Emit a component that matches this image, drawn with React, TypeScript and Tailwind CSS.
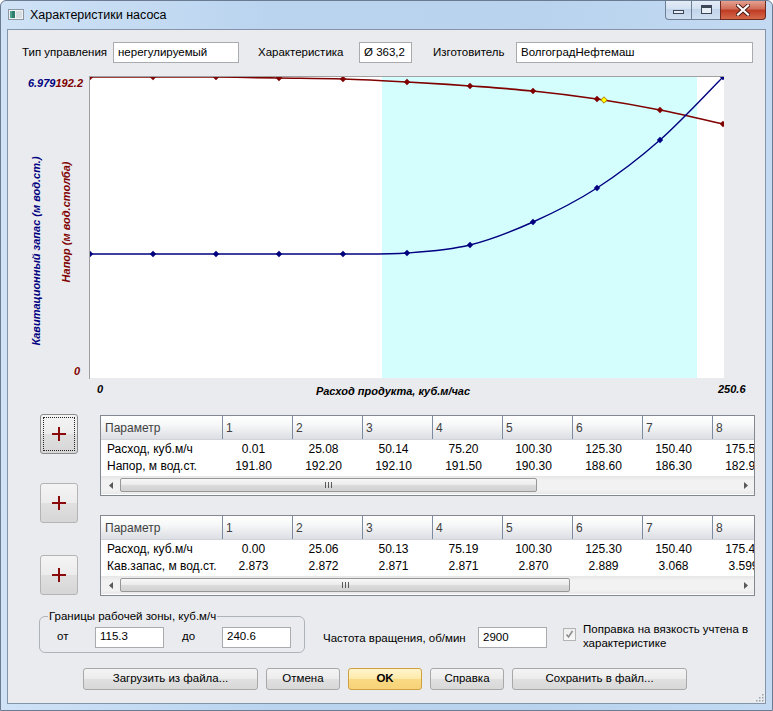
import React from "react";

const F = "font-['Liberation_Sans',Arial,sans-serif]";

type P = [number, number];

const redPts: P[] = [[82,7],[145,7],[208,7],[271,8],[335,9],[399,12],[462,16],[525,21],[589,29],[652,40],[715,54]];
const bluePts: P[] = [[82,184],[145,184],[208,184],[271,184],[335,184],[399,183],[462,175],[525,152],[589,118],[652,70],[715,7]];

function smooth(pts: P[]): string {
  let d = `M${pts[0][0]},${pts[0][1]}`;
  for (let i = 0; i < pts.length - 1; i++) {
    const p0 = pts[i - 1] || pts[i];
    const p1 = pts[i];
    const p2 = pts[i + 1];
    const p3 = pts[i + 2] || p2;
    const c1x = p1[0] + (p2[0] - p0[0]) / 6;
    const c1y = p1[1] + (p2[1] - p0[1]) / 6;
    const c2x = p2[0] - (p3[0] - p1[0]) / 6;
    const c2y = p2[1] - (p3[1] - p1[1]) / 6;
    d += ` C${c1x},${c1y} ${c2x},${c2y} ${p2[0]},${p2[1]}`;
  }
  return d;
}

function diamond(x: number, y: number, r: number) {
  return `${x},${y - r} ${x + r},${y} ${x},${y + r} ${x - r},${y}`;
}

function Chart() {
  const tf = { fontFamily: "'Liberation Sans', Arial, sans-serif", fontWeight: 700, fontStyle: "italic" as const, fontSize: 11 };
  return (
    <svg width="757" height="340" viewBox="0 0 757 340" className="block shrink-0">
      <defs>
        <clipPath id="plot">
          <rect x="82" y="7" width="634" height="301" />
        </clipPath>
      </defs>
      <rect x="81" y="6" width="635" height="302" fill="#ffffff" />
      <rect x="374" y="7" width="315" height="301" fill="#d4fefe" />
      <line x1="81.5" y1="6" x2="81.5" y2="309" stroke="#a0a0a0" />
      <line x1="81" y1="6.5" x2="716" y2="6.5" stroke="#a0a0a0" />
      <g clipPath="url(#plot)">
        <path d={smooth(redPts)} fill="none" stroke="#800000" strokeWidth="1.7" />
        <path d={smooth(bluePts)} fill="none" stroke="#000080" strokeWidth="1.4" />
        {redPts.map(([x, y], i) => (
          <polygon key={"r" + i} points={diamond(x, y, 3.2)} fill="#800000" />
        ))}
        {bluePts.map(([x, y], i) => (
          <polygon key={"b" + i} points={diamond(x, y, 3.2)} fill="#000080" />
        ))}
        <polygon points={diamond(596, 30, 3.2)} fill="#ffff00" stroke="#b07800" strokeWidth="1" />
      </g>
      <text x="75" y="17" textAnchor="end" style={tf}>
        <tspan fill="#000080">6.979</tspan>
        <tspan fill="#800000">192.2</tspan>
      </text>
      <text x="72" y="305" textAnchor="end" style={tf} fill="#800000">0</text>
      <text x="89" y="323" style={tf} fill="#000000">0</text>
      <text x="385" y="325" textAnchor="middle" style={tf} fill="#000000">Расход продукта, куб.м/час</text>
      <text x="710" y="323" style={tf} fill="#000000">250.6</text>
      <text transform="translate(32,181) rotate(-90)" textAnchor="middle" style={tf} fill="#000080">
        Кавитационный запас (м вод.ст.)
      </text>
      <text transform="translate(62,152) rotate(-90)" textAnchor="middle" style={tf} fill="#800000">
        Напор (м вод.столба)
      </text>
    </svg>
  );
}

function Tri({ dir }: { dir: "l" | "r" }) {
  return (
    <svg width="4" height="7" viewBox="0 0 4 7">
      <path d={dir === "l" ? "M4 0L0 3.5L4 7Z" : "M0 0L4 3.5L0 7Z"} fill="#5a5a5a" />
    </svg>
  );
}

function Scrollbar({ thumbClass }: { thumbClass: string }) {
  return (
    <div className="h-[18px] shrink-0 flex items-stretch bg-[linear-gradient(#e6e6e6,#f2f2f2_25%,#f2f2f2_75%,#e9e9e9)]">
      <div className="w-[19px] shrink-0 flex items-center justify-center">
        <Tri dir="l" />
      </div>
      <div
        className={
          "my-[2px] shrink-0 rounded-[2px] border border-[#979797] bg-[linear-gradient(#f7f7f7,#ececec_45%,#dadada_55%,#d2d2d2)] flex items-center justify-center gap-[2px] " +
          thumbClass
        }
      >
        <div className="w-[1px] h-[6px] bg-[#5a5a5a]" />
        <div className="w-[1px] h-[6px] bg-[#5a5a5a]" />
        <div className="w-[1px] h-[6px] bg-[#5a5a5a]" />
      </div>
      <div className="flex-1" />
      <div className="w-[17px] shrink-0 flex items-center justify-center">
        <Tri dir="r" />
      </div>
    </div>
  );
}

const headCols = ["1", "2", "3", "4", "5", "6", "7", "8"];

function DataTable({ rows, thumbClass }: { rows: [string, string[]][]; thumbClass: string }) {
  return (
    <div className={"w-[655px] h-[81px] border border-[#828790] bg-white flex flex-col overflow-hidden " + F}>
      <div className="flex h-[24px] shrink-0 overflow-hidden bg-[linear-gradient(#ffffff,#f6f7f8_40%,#e6e8eb_75%,#dcdfe4)] border-b border-[#d0d4da] text-[12px] text-[#3f3f3f]">
        <div className="w-[121px] shrink-0 pl-[4px] flex items-center">Параметр</div>
        {headCols.map((c) => (
          <div key={c} className="w-[70px] shrink-0 border-l border-[#7c8ba0] pl-[3px] flex items-center">
            {c}
          </div>
        ))}
      </div>
      {rows.map(([name, vals]) => (
        <div key={name} className="flex h-[17px] shrink-0 overflow-hidden text-[12px] text-black items-center">
          <div className="w-[121px] shrink-0 pl-[6px] whitespace-nowrap">{name}</div>
          {vals.map((v, i) => (
            <div key={i} className="w-[70px] shrink-0 pl-[1px] pr-[8px] text-center whitespace-nowrap">
              {v}
            </div>
          ))}
        </div>
      ))}
      <div className="h-[2px] shrink-0" />
      <Scrollbar thumbClass={thumbClass} />
    </div>
  );
}

function PlusBtn({ focused }: { focused?: boolean }) {
  return (
    <div
      className={
        "relative w-[38px] h-[40px] rounded-[3px] border bg-[linear-gradient(#f4f4f4,#ececec_50%,#e0e0e0_50%,#d6d6d6)] flex items-center justify-center " +
        (focused ? "border-[#8a8a8a]" : "border-[#b4b4b4]")
      }
    >
      {focused && <div className="absolute inset-[2px] border border-dotted border-[#222]" />}
      <svg width="14" height="14" viewBox="0 0 14 14">
        <path d="M7 0V14M0 7H14" stroke="#8b0a0a" strokeWidth="2" />
      </svg>
    </div>
  );
}

function TextBox({ w, value }: { w: string; value: string }) {
  return (
    <div
      className={
        "h-[21px] shrink-0 border border-[#a9abaf] bg-white pl-[4px] flex items-center text-[11.5px] text-black whitespace-nowrap " +
        w
      }
    >
      {value}
    </div>
  );
}

function Btn({ w, children, primary }: { w: string; children: React.ReactNode; primary?: boolean }) {
  return (
    <div
      className={
        "h-[22px] shrink-0 rounded-[3px] border flex items-center justify-center text-[11.5px] text-black " +
        w +
        (primary
          ? " border-[#d0a040] bg-[linear-gradient(#fff4cc,#fde9a8_50%,#f9da84_50%,#f7d278)] font-bold"
          : " border-[#a8a8a8] bg-[linear-gradient(#f4f4f4,#ececec_50%,#e0e0e0_50%,#d8d8d8)]")
      }
    >
      {children}
    </div>
  );
}

export default function App() {
  const t1: [string, string[]][] = [
    ["Расход, куб.м/ч", ["0.01", "25.08", "50.14", "75.20", "100.30", "125.30", "150.40", "175.50"]],
    ["Напор, м вод.ст.", ["191.80", "192.20", "192.10", "191.50", "190.30", "188.60", "186.30", "182.90"]],
  ];
  const t2: [string, string[]][] = [
    ["Расход, куб.м/ч", ["0.00", "25.06", "50.13", "75.19", "100.30", "125.30", "150.40", "175.40"]],
    ["Кав.запас, м вод.ст.", ["2.873", "2.872", "2.871", "2.871", "2.870", "2.889", "3.068", "3.599"]],
  ];

  return (
    <div
      className={
        "w-[773px] h-[711px] overflow-hidden rounded-t-[6px] border border-[#6a7b92] bg-[linear-gradient(90deg,#cfe2f6,#bad4ef_35%,#b9d3ee_70%,#c3daf2)] flex flex-col " +
        F
      }
    >
      {/* title bar */}
      <div className="h-[28px] shrink-0 flex items-start">
        <div className="ml-[7px] mt-[8px] shrink-0">
          <svg width="16" height="11" viewBox="0 0 16 11">
            <rect x="0.5" y="0.5" width="15" height="10" fill="#f2f2f2" stroke="#8a96a4" />
            <rect x="2" y="2" width="5" height="7" fill="#2f7d6e" />
            <rect x="2" y="2" width="2" height="7" fill="#4aa08d" />
            <rect x="8" y="2" width="6" height="7" fill="#d8dde2" />
          </svg>
        </div>
        <div className="ml-[6px] mt-[7px] text-[12.5px] leading-[15px] text-black">Характеристики насоса</div>
        <div className="ml-auto mr-[6px] -mt-[1px] flex h-[20px] shrink-0">
          <div className="w-[27px] h-full rounded-bl-[4px] border border-t-0 border-[#6f7f96] bg-[linear-gradient(#e6eef8,#d2e0f0_50%,#c2d4ea_50%,#cfdff1)] flex items-center justify-center">
            <div className="mt-[4px] w-[11px] h-[4px] border border-[#3c4656] bg-[#e8eef5]" />
          </div>
          <div className="w-[28px] h-full border-b border-[#6f7f96] bg-[linear-gradient(#e6eef8,#d2e0f0_50%,#c2d4ea_50%,#cfdff1)] flex items-center justify-center">
            <div className="w-[11px] h-[9px] border border-t-[3px] border-[#3c4656] bg-[#e8eef5]" />
          </div>
          <div className="w-[46px] h-full rounded-br-[4px] border border-t-0 border-[#6e2a20] bg-[linear-gradient(#e9a696,#d0705c_45%,#c03c24_55%,#d46a4a)] flex items-center justify-center">
            <svg width="14" height="12" viewBox="0 0 14 12">
              <path d="M2 1.5L12 10.5M12 1.5L2 10.5" stroke="#4a1a14" strokeWidth="4" strokeLinecap="square" />
              <path d="M2 1.5L12 10.5M12 1.5L2 10.5" stroke="#ffffff" strokeWidth="2.2" strokeLinecap="square" />
            </svg>
          </div>
        </div>
      </div>

      {/* client */}
      <div className="mx-[6px] w-[759px] h-[675px] shrink-0 border border-[#8595a9] bg-[#eaebee] flex flex-col relative">
        {/* row 1 */}
        <div className="mt-[12px] h-[21px] flex items-center text-[11.5px] text-black">
          <div className="ml-[14px] w-[91px] shrink-0">Тип управления</div>
          <TextBox w="w-[126px]" value="нерегулируемый" />
          <div className="ml-[19px] w-[101px] shrink-0">Характеристика</div>
          <TextBox w="w-[53px]" value="Ø 363,2" />
          <div className="ml-[21px] w-[83px] shrink-0">Изготовитель</div>
          <TextBox w="w-[237px]" value="ВолгоградНефтемаш" />
        </div>

        {/* chart */}
        <div className="mt-[7px]">
          <Chart />
        </div>

        {/* tables */}
        <div className="flex pl-[32px]">
          <div className="w-[38px] shrink-0 flex flex-col pt-[4px]">
            <PlusBtn focused />
            <div className="mt-[29px]">
              <PlusBtn />
            </div>
            <div className="mt-[32px]">
              <PlusBtn />
            </div>
          </div>
          <div className="ml-[22px] pt-[5px] flex flex-col">
            <DataTable rows={t1} thumbClass="w-[417px]" />
            <div className="mt-[19px]">
              <DataTable rows={t2} thumbClass="w-[450px]" />
            </div>
          </div>
        </div>

        {/* bottom row */}
        <div className="mt-[20px] flex items-start text-[11.5px] text-black">
          <div className="relative ml-[31px] w-[266px] h-[37px] shrink-0 rounded-[6px] border border-[#aeb3ba]">
            <div className="absolute -top-[8px] left-[8px] px-[1px] bg-[#eaebee] leading-[14px] whitespace-nowrap">
              Границы рабочей зоны, куб.м/ч
            </div>
            <div className="h-full pt-[5px] flex items-center">
              <div className="ml-[17px] w-[38px] shrink-0">от</div>
              <TextBox w="w-[69px]" value="115.3" />
              <div className="ml-[18px] w-[40px] shrink-0">до</div>
              <TextBox w="w-[69px]" value="240.6" />
            </div>
          </div>
          <div className="ml-[18px] mt-[15px] w-[155px] shrink-0 leading-[14px] whitespace-nowrap">
            Частота вращения, об/мин
          </div>
          <div className="mt-[11px]">
            <TextBox w="w-[69px]" value="2900" />
          </div>
          <div className="ml-[16px] mt-[12px] w-[13px] h-[13px] shrink-0 border border-[#b4b4b4] bg-[linear-gradient(#eeeeee,#f8f8f8)] flex items-center justify-center">
            <svg width="9" height="9" viewBox="0 0 9 9">
              <path d="M1.5 4.5L3.5 7L7.5 1" fill="none" stroke="#8e8e8e" strokeWidth="1.6" />
            </svg>
          </div>
          <div className="ml-[7px] mt-[6px] leading-[14px]">
            Поправка на вязкость учтена в
            <br />
            характеристике
          </div>
        </div>

        {/* buttons */}
        <div className="mt-[15px] ml-[75px] flex gap-[8px]">
          <Btn w="w-[175px]">Загрузить из файла...</Btn>
          <Btn w="w-[74px]">Отмена</Btn>
          <Btn w="w-[74px]" primary>
            OK
          </Btn>
          <Btn w="w-[74px]">Справка</Btn>
          <Btn w="w-[175px]">Сохранить в файл...</Btn>
        </div>

        {/* resize grip */}
        <svg width="10" height="10" viewBox="0 0 10 10" className="absolute right-[1px] bottom-[1px]">
          {[
            [8, 2],
            [8, 5],
            [5, 5],
            [8, 8],
            [5, 8],
            [2, 8],
          ].map(([x, y], i) => (
            <rect key={i} x={x} y={y} width="1.5" height="1.5" fill="#9aa3ad" />
          ))}
        </svg>
      </div>
    </div>
  );
}
